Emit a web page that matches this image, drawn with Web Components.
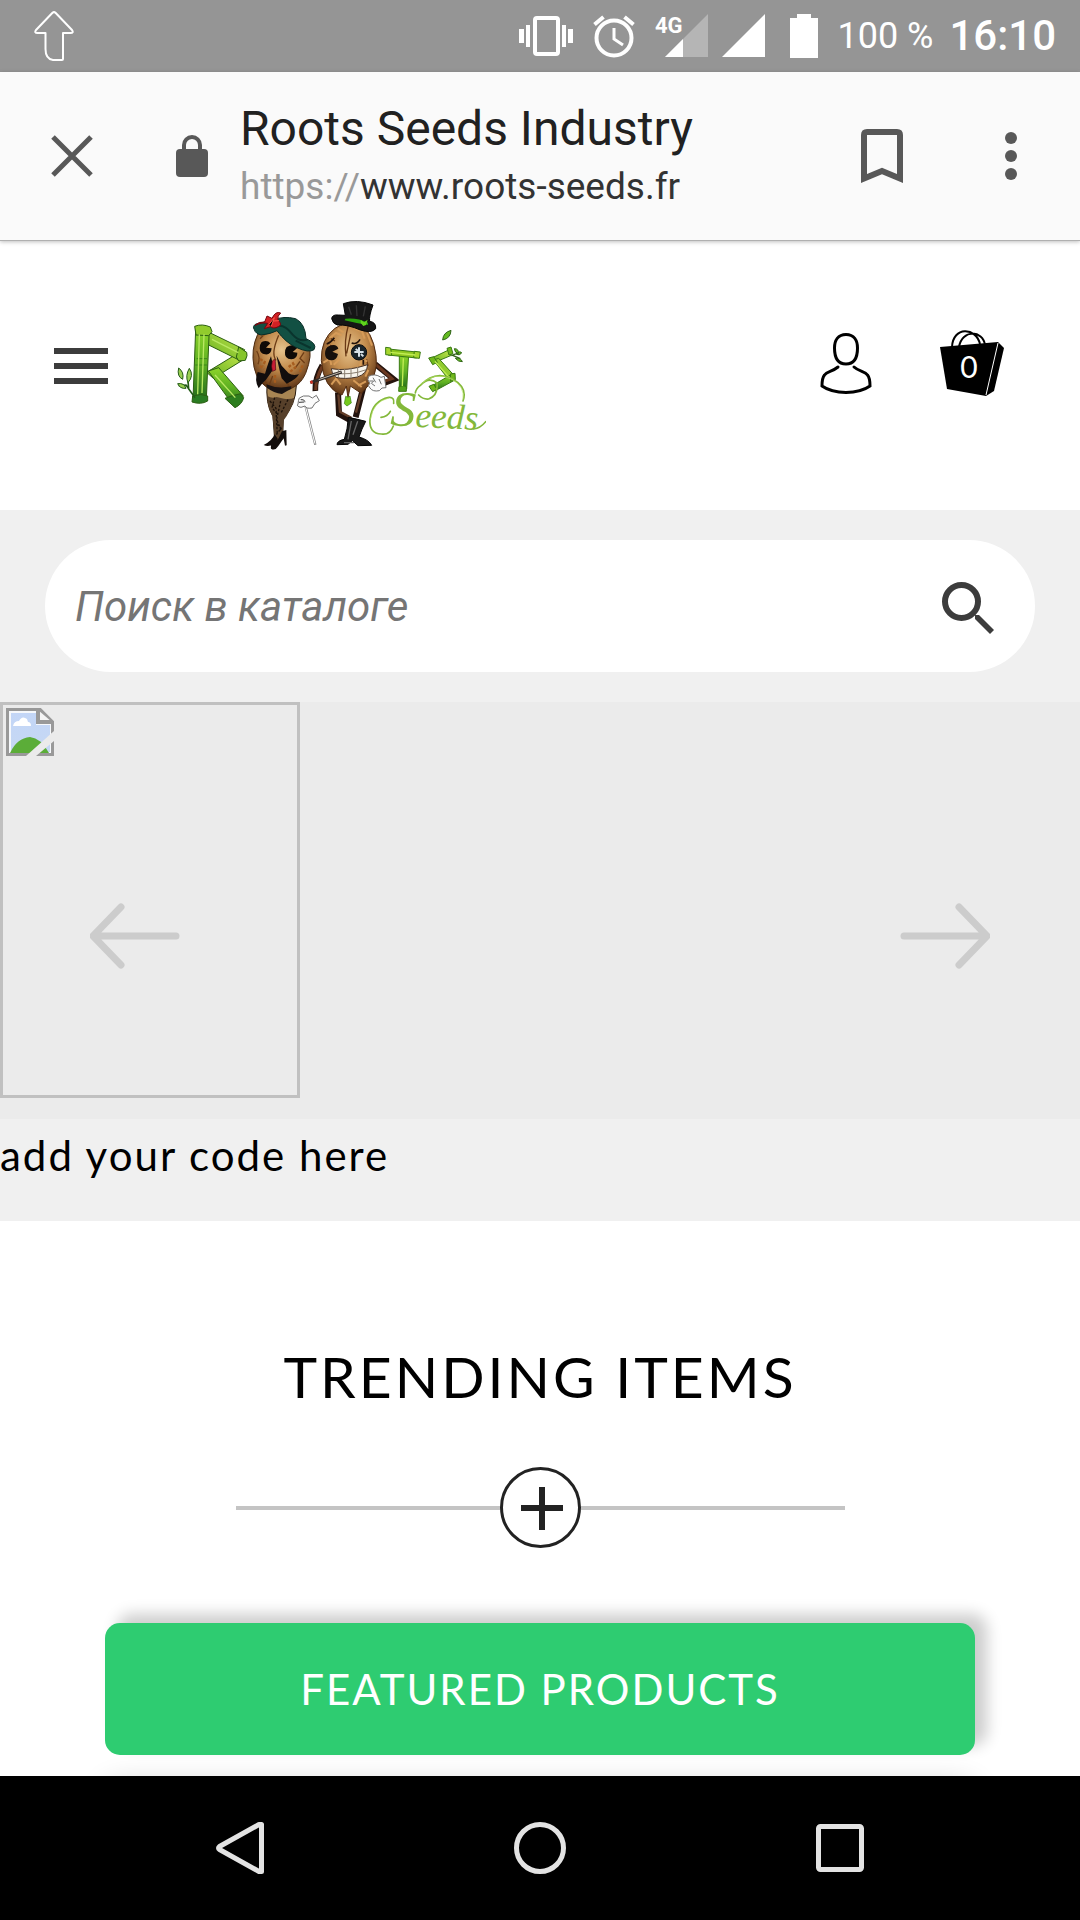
<!DOCTYPE html>
<html lang="ru">
<head>
<meta charset="UTF-8">
<meta name="viewport" content="width=device-width, initial-scale=1">
<title>Roots Seeds Industry</title>
<style>
  body {
    margin: 0;
    background: #fff;
    color: #000;
    font-family: Lato, "Noto Sans", sans-serif;
  }
</style>
</head>
<body>
<roots-app></roots-app>

<script>
/**
 * Base class: renders the markup of the component into an open shadow root
 */
class RootsElement extends HTMLElement {
  constructor() {
    super();
    this.attachShadow({ mode: 'open' });
  }

  connectedCallback() {
    this.shadowRoot.innerHTML = `
      <style>
        * { box-sizing: border-box; }
        svg { display: block; flex: none; }
        button {
          display: flex;
          align-items: center;
          justify-content: center;
          margin: 0;
          padding: 0;
          border: 0;
          background: none;
          color: inherit;
          font: inherit;
          cursor: pointer;
        }
      </style>
      ${this.template()}
    `;
  }
}

/**
 * Android status bar
 */
class StatusBar extends RootsElement {
  template() {
    return `
      <style>
        :host {
          display: flex;
          align-items: center;
          justify-content: space-between;
          height: 72px;
          padding: 0 24px 0 34px;
          background: #959595;
          color: #fff;
          font-family: Roboto, "Noto Sans", sans-serif;
        }

        .indicators {
          display: flex;
          align-items: center;
          gap: 14px;
        }

        .battery {
          font-size: 36px;
          line-height: 48px;
        }

        .time {
          padding-left: 2px;
          font-size: 42px;
          font-weight: 500;
          line-height: 48px;
        }

        .network {
          font: 700 22px Roboto, sans-serif;
        }
      </style>

      <svg width="40" height="50" viewBox="0 0 40 50" fill="none" stroke="#fff" stroke-width="2" stroke-linejoin="round">
        <path d="M18.500 1.800 Q20 .5 21.500 1.800 L38 19 Q40 22 36.500 22 H29 V48 Q29 49 28 49 H19 Q11.500 48 11.500 38 V22 H3.500 Q0 22 2 19 Z"/>
      </svg>

      <div class="indicators">
        <svg width="54" height="44" viewBox="0 0 54 44" fill="#fff">
          <path d="M0 15h5v14H0zM7 11h4v22H7zM43 11h4v22h-4zM49 15h5v14h-5z"/>
          <rect x="16" y="4" width="23" height="36" rx="2" fill="none" stroke="#fff" stroke-width="4"/>
        </svg>
        <svg width="54" height="44" viewBox="0 0 54 44" fill="none" stroke="#fff" stroke-width="4">
          <circle cx="27" cy="24" r="17.500"/>
          <path d="M7.500 10.500 16.500 3M46.500 10.500 37.500 3"/>
          <path d="M27 14v11l9 6" stroke-width="3"/>
        </svg>
        <svg width="53" height="44" viewBox="0 0 53 44" fill="#fff">
          <path d="M53 0v43H10z" opacity=".3"/>
          <path d="M28 25v18H10z"/>
          <text class="network" x="0" y="19">4G</text>
        </svg>
        <svg width="43" height="44" viewBox="0 0 43 44" fill="#fff">
          <path d="M43 0v43H0z"/>
        </svg>
        <svg width="44" height="44" viewBox="0 0 44 44" fill="#fff">
          <path d="M18 0h14v4h7v40H11V4h7z"/>
        </svg>
        <span class="battery">100 %</span>
        <span class="time">16:10</span>
      </div>
    `;
  }
}

/**
 * Custom tab toolbar with the page title and its address
 */
class BrowserBar extends RootsElement {
  template() {
    return `
      <style>
        :host {
          display: flex;
          align-items: center;
          height: 169px;
          padding: 0 33px 0 36px;
          border-bottom: 1px solid #b0b0b0;
          box-shadow: 0 1px 4px rgba(0, 0, 0, 0.25);
          background: #fafafa;
          color: #585858;
          font-family: Roboto, "Noto Sans", sans-serif;
          position: relative;
          z-index: 1;
        }

        button {
          flex: none;
          width: 72px;
          height: 72px;
        }

        .lock {
          margin: 0 32px 0 68px;
        }

        .page {
          display: flex;
          flex-direction: column;
          flex: 1;
          gap: 8px;
          min-width: 0;
          padding-bottom: 2px;
        }

        .title {
          color: #212121;
          font-size: 48px;
          line-height: 56px;
        }

        .address {
          color: #333;
          font-size: 37px;
          line-height: 44px;
        }

        .scheme {
          color: #999;
        }

        .actions {
          display: flex;
          gap: 57px;
        }
      </style>

      <button aria-label="Close">
        <svg width="42" height="42" viewBox="0 0 42 42" stroke="#585858" stroke-width="5">
          <path d="M2 2 40 40M40 2 2 40"/>
        </svg>
      </button>
      <svg class="lock" width="32" height="42" viewBox="0 0 32 42" fill="#585858">
        <rect y="14" width="32" height="28" rx="4"/>
        <path d="M8 16V10a8 8 0 0 1 16 0v6" fill="none" stroke="#585858" stroke-width="4"/>
      </svg>
      <div class="page">
        <span class="title"><slot name="title"></slot></span>
        <span class="address"><span class="scheme">https://</span><slot name="host"></slot></span>
      </div>
      <div class="actions">
        <button aria-label="Bookmark">
          <svg width="42" height="54" viewBox="0 0 42 54" fill="none" stroke="#585858" stroke-width="6">
            <path d="M3 49.500V6q0-3 3-3h30q3 0 3 3v43.500L21 42z"/>
          </svg>
        </button>
        <button aria-label="More">
          <svg width="12" height="48" viewBox="0 0 12 48" fill="#585858">
            <circle cx="6" cy="6" r="6"/><circle cx="6" cy="24" r="6"/><circle cx="6" cy="42" r="6"/>
          </svg>
        </button>
      </div>
    `;
  }
}

/**
 * Shop logo: bamboo lettering with the two seed characters
 */
class RootsLogo extends RootsElement {
  template() {
    return `
      <style>
        :host {
          display: block;
        }

        .script {
          font: italic 106px "Liberation Serif", serif;
          fill: #83b83a;
        }

        .script .initial {
          font-size: 150px;
        }
      </style>

      <svg width="309" height="150" viewBox="51 30 927 450" role="img" aria-label="Roots Seeds">
        <defs>
          <linearGradient id="cane" x1="0" y1="0" x2="0" y2="1">
            <stop offset="0" stop-color="#8ed52a"/><stop offset=".5" stop-color="#5eb022"/><stop offset="1" stop-color="#236b1b"/>
          </linearGradient>
          <linearGradient id="lime" x1="0" y1="1" x2="1" y2="0">
            <stop offset="0" stop-color="#62ad1f"/><stop offset="1" stop-color="#c5e84c"/>
          </linearGradient>
          <radialGradient id="nut" cx=".5" cy=".35" r=".65">
            <stop offset="0" stop-color="#e7c48e"/><stop offset=".5" stop-color="#c18a4b"/><stop offset="1" stop-color="#5a3113"/>
          </radialGradient>
        </defs>

        <!-- R -->
        <g stroke="#2c5f12" stroke-width="3" stroke-linejoin="round">
          <path d="M232 188 255 203 160 262 140 244z" fill="url(#lime)"/>
          <path d="M145 240 176 230 250 315 222 346z" fill="url(#cane)"/>
          <path d="M195 322q18-8 47-14l9 12q-5 20-26 30z" fill="#2d7d1e"/>
          <path d="M143 122 254 176 243 210 138 158z" fill="url(#lime)"/>
          <path d="M236 168l24 16q4 8-4 24l-20 2-7-12z" fill="#86c52b"/>
          <path d="M107 115 148 113 139 325 99 325z" fill="url(#cane)"/>
          <path d="M104 106q22-9 47 2l5 14-10 12-38-2z" fill="#91cb2d"/>
          <path d="M98 315q25-9 45 0v15q-20 12-47 3z" fill="#2a7c22"/>
          <path d="M106 222h35M110 203h31" stroke="#3d861a"/>
          <path d="M118 130 113 310M132 130 126 306M156 145 235 185M165 252 226 320" stroke="#b9e862" stroke-width="4"/>
        </g>
        <g stroke="#245b17" stroke-width="3" fill="#99cf51">
          <path d="M105 320 78 282 56 284M86 294 84 268" fill="none" stroke-width="5"/>
          <path d="M56 231q17 12 12 34-18-9-12-34zM88 232q15 22-4 43-9-21 4-43zM53 278q20-3 25 14-18 2-25-14z"/>
        </g>

        <!-- lady: stockings and shoes, body, gloves, hat -->
        <g>
          <path d="M322 270 Q315 340 339 376 L344 448 368 444 370 382 Q407 342 409 284z" fill="#a88553" stroke="#2a1b0e" stroke-width="3"/>
          <path d="M322 315 Q335 323 350 318 L372 323 Q390 326 404 320 Q392 360 371 388 L366 442 346 447 337 376 Q321 342 322 315z" fill="#57402a"/>
          <path d="M330 330l18 22 4 80M344 320l-8 30 16 20M362 330l-12 55 14 35M384 326l-22 42M350 400l14 12-15 18" fill="none" stroke="#1b110a" stroke-width="4" stroke-dasharray="7 5"/>
          <path d="M344 430q-8 20-33 32 16 7 32-4l10-15zM345 453q-15 6-12 20 12 8 22-8l16-23 4 22 5-1-1-46-13 4-10 21z" fill="#130d0b"/>
          <path d="M293 130 Q272 175 282 228 Q293 284 342 298 Q411 306 437 247 Q459 190 445 162 Q410 105 335 110z" fill="url(#nut)" stroke="#4c2b10" stroke-width="3"/>
          <path d="M356 133q-24 55-8 75M290 180q12 20 4 40M432 184l-12 18 14 14M300 143l15-15M405 232l15-21M309 258l12 22M338 255l-10 26M380 267l8 24" fill="none" stroke="#6e3d16" stroke-width="4"/>
          <path d="M306 133l19-10M300 204l14 9-5 12M386 228l13-11 7 12-16 14M300 225l12 9M345 252v26M428 223l-8 20" fill="none" stroke="#a65d1f" stroke-width="7" stroke-dasharray="9 5"/>
          <path d="M305 153q17-7 26 4l-13 13 17 2q-2 21-20 18-15-1-16-18 0-12 6-19zM380 168q20-12 31 4l-13 11 14 2q1 18-18 20-21-2-19-20 0-10 5-17z" fill="#0f0a07"/>
          <path d="M333 196 Q325 214 315 248 L293 243 Q282 268 296 292 Q307 274 318 266 L341 233z M350 194 Q351 207 365 262 L380 278 Q408 266 417 250 Q397 255 386 247 L365 224z" fill="#110d0d"/>
          <path d="M337 210q10-10 9 2l1 25-10 4q-5-15 0-31z" fill="#c81d35" stroke="#4b0a13" stroke-width="2"/>
          <path d="M319 280q33 15 75 6l-1 8q-13 6-27 15-25-3-45-19z" fill="#191313"/>
          <path d="M283 116 Q276 105 288 99 Q321 91 341 87 Q370 74 407 83 Q436 98 438 143 Q473 158 462 176 Q447 187 408 169 Q377 155 351 119 Q332 129 304 132 Q286 128 283 116z" fill="#125043" stroke="#0a2d27" stroke-width="3"/>
          <path d="M345 108q25-13 53 23 20 23 44 15M407 149l45 22" fill="none" stroke="#0a342d" stroke-width="6"/>
          <path d="M285 103q12-12 29-10l7-18 15 7q11-23 26-16-11 8-8 21 15 15 1 20-15 8-23 0l-19 6 10-16q-15-4-38 6z" fill="#d22124" stroke="#75050c" stroke-width="3"/>
          <path d="M327 100l16-20-9 26M340 90l17-1" stroke="#ff5a4c" stroke-width="3"/>
        </g>

        <!-- gentleman: arms, legs and boots, body, face, hat -->
        <g>
          <path d="M487 223q-23 38-21 77M645 219l57 46-31 12" fill="none" stroke="#25140d" stroke-width="17"/>
          <path d="M487 225q-20 38-20 72M648 221l48 42-25 8" fill="none" stroke="#6b3820" stroke-width="9"/>
          <path d="M534 304 537 369 577 391M611 285 587 379" fill="none" stroke="#21120d" stroke-width="18"/>
          <path d="M535 310 540 362 574 380M607 292 588 365" fill="none" stroke="#633d28" stroke-width="7"/>
          <path d="M565 379 Q590 384 617 391 Q605 414 597 438 Q626 446 635 463 L594 464 577 449 564 460 531 461 Q531 449 553 445 Q563 415 565 379z" fill="#191919" stroke="#050505" stroke-width="3"/>
          <path d="M574 390l-10 55M593 391l-14 40M552 455h30" stroke="#666" stroke-width="4"/>
          <path d="M525 112 Q482 144 484 209 Q490 292 546 312 L559 285 564 320 571 285 604 307 Q658 257 648 193 Q638 117 595 98 Q557 90 525 112z" fill="url(#nut)" stroke="#522b10" stroke-width="3"/>
          <path d="M565 103q-13 45-7 93M572 129l-12 58M505 138l20 12M510 163l18 5M603 210l10-5M620 205l4 20" fill="none" stroke="#6a3915" stroke-width="4"/>
          <path d="M508 142l20-16 17 7M533 113l18 11M582 113l24 8 8 22M621 126l15 38M490 215l20-12 4 19M539 205l-18 16M600 225l5-20 17 6M514 281l14-18 14 18M580 268l25 20M594 284l24-13M625 237l-9 20" fill="none" stroke="#d69b58" stroke-width="6"/>
          <path d="M508 165q22-8 27 8l-18 9 17 7q-4 20-21 19-18-2-18-20 0-18 13-23z" fill="#17100c"/>
          <circle cx="597" cy="184" r="23" fill="#19242b" stroke="#080b0d" stroke-width="3"/>
          <path d="M583 183h28M597 169v28M587 174l9 7M603 189l7 7" stroke="#d7e1e7" stroke-width="6"/>
          <path d="M500 159q12-4 23-19M575 156q15 6 25-11M610 206v15" fill="none" stroke="#22120b" stroke-width="5"/>
          <path d="M514 233q46 9 109-12-2 28-31 37-38 8-64 1-14-10-14-26z" fill="#f7f4ec" stroke="#473329" stroke-width="3"/>
          <path d="M521 246q51 8 98-10M535 234v25M554 234v27M573 231v29M593 228v28" fill="none" stroke="#8b8072" stroke-width="3"/>
          <path d="M451 275 545 243" stroke="#302b29" stroke-width="9"/>
          <path d="M476 266 543 243" stroke="#c0b7aa" stroke-width="3"/>
          <path d="M451 275l7-3" stroke="#cf3325" stroke-width="9"/>
          <path d="M557 316l-4 22 8 7 13-9-4-21-6 4z" fill="#75c91d" stroke="#34840d" stroke-width="2"/>
          <path d="M515 83 Q516 70 535 72 L556 73 550 38 Q590 23 639 42 Q626 77 629 91 Q649 94 647 113 Q635 128 601 117 Q563 100 532 102 Q518 98 515 83z" fill="#161616" stroke="#050505" stroke-width="3"/>
          <path d="M556 83q35-4 68 12v7q-35-5-70-14z" fill="#2ba30e"/>
          <path d="M602 86l10 8 11-8-5 16-8 3-8-9z" fill="#62d51d"/>
          <path d="M566 47l8 24M589 43l2 32M616 46l-6 30" stroke="#343434" stroke-width="4"/>
        </g>

        <!-- gloves and walking cane -->
        <g fill="#fbfbfb" stroke="#737373" stroke-width="3">
          <path d="M437 347 466 461" stroke="#858585" stroke-width="7"/>
          <path d="M437 349 465 458" stroke="#fff" stroke-width="3"/>
          <path d="M418 321q10-9 29-6l10 6 12-8 9 16-13 8-9 14q-18 3-21-6l-12 4q-15-3-9-10 1-13 4-18z"/>
          <path d="M422 326q8-2 14 6M417 334l16-1" fill="none" stroke="#333"/>
          <path d="M626 256q18-10 37 3l10-3 5 34-12 1-8 8q-20 4-28-8-9-7-1-14-9-12-3-21z"/>
          <path d="M628 270h13l-7 7 11 8M639 260l8 14M657 264l7 16" fill="none"/>
        </g>

        <!-- T and S -->
        <g stroke="#3a7a13" stroke-width="3" stroke-linejoin="round">
          <path d="M718 190h28l-6 104h-22z" fill="url(#cane)"/>
          <path d="M717 287q11-6 22 0v14h-23z" fill="#52a21b"/>
          <path d="M686 174 770 183v18l-86-9z" fill="#8fc720"/>
          <path d="M677 169l15 2 3 22-18-2zM763 181l18 2-3 19-17-2z" fill="#a7d62e"/>
          <path d="M866 177 813 202 817 217 874 193z" fill="url(#lime)"/>
          <path d="M820 207 836 202 881 252 868 268z" fill="#92cc2f"/>
          <path d="M875 250 883 268 826 299 815 285z" fill="url(#cane)"/>
          <path d="M806 201l15-4 11 17-14 7zM861 172l12-4 6 20-12 4zM871 249l14-2 1 19-14 5zM807 286l14-6 10 15-13 7z" fill="#6fb81b"/>
          <path d="M691 184l75 8M730 202l-3 83M825 211l45 51" stroke="#c2ed56" stroke-width="4"/>
        </g>
        <g fill="#63ba20" stroke="#316419" stroke-width="3">
          <path d="M848 147q1-22 25-29-1 24-25 29z"/>
          <path d="M874 194 894 186M878 193l23 10" fill="none" stroke-width="4"/>
          <path d="M883 173q14 0 12 15-11-3-12-15zM889 190q11-13 16-4-7 9-16 4zM886 202q16-3 21 10-12 1-21-10z"/>
        </g>

        <!-- script line with its flourish -->
        <text class="script" x="690" y="403" transform="rotate(3 690 403)"><tspan class="initial">S</tspan>eeds</text>
        <g fill="none" stroke="#83b83a" stroke-width="5" stroke-linecap="round">
          <path d="M663 379q20-2 28-18M700 405Q690 433 664 429 Q626 427 630 384 Q637 329 687 319 Q704 318 701 337"/>
          <path d="M776 312 Q790 326 806 324 Q835 313 831 276 Q807 256 781 283 Q768 292 766 306M781 283 Q824 237 876 263 Q924 289 909 330M941 414q20-2 36-22"/>
        </g>
        <path d="M632 384Q639 331 687 321M781 281 Q824 239 876 265 Q915 287 909 325" fill="none" stroke="#b6e265" stroke-width="2"/>
      </svg>
    `;
  }
}

/**
 * Shop header: menu, logo, account and cart
 */
class ShopHeader extends RootsElement {
  template() {
    return `
      <style>
        :host {
          display: block;
          background: #fff;
        }

        header {
          display: flex;
          align-items: center;
          padding: 40px 76px 59px 54px;
        }

        .logo {
          margin-left: 69px;
          padding-top: 20px;
        }

        nav {
          display: flex;
          align-items: center;
          gap: 68px;
          margin-left: auto;
          padding-bottom: 6px;
        }

        a {
          display: block;
          color: inherit;
          text-decoration: none;
        }

        .cart {
          position: relative;
        }

        .count {
          position: absolute;
          inset: 18px 6px auto 0;
          color: #fff;
          font-size: 30px;
          line-height: 36px;
          text-align: center;
        }
      </style>

      <header>
        <button aria-label="Menu">
          <svg width="54" height="36" viewBox="0 0 54 36" fill="#3c3c3c">
            <path d="M0 0h54v6H0zM0 15h54v6H0zM0 30h54v6H0z"/>
          </svg>
        </button>
        <a class="logo" href="#home"><roots-logo></roots-logo></a>
        <nav>
          <a href="#account" aria-label="Account">
            <svg width="52" height="66" viewBox="0 0 52 66" fill="none" stroke="#000" stroke-width="3" stroke-linecap="round">
              <path d="M26 4.500c8 0 11.500 6 11.500 13.500 0 9-3 16-11.500 16s-11.500-7-11.500-16C14.500 10.500 18 4.500 26 4.500z"/>
              <path d="M18 37c-6 5-11 4-13.500 8C2 48 2 51 2 56c12 8.500 36 8.500 48 0 0-5 0-8-2.500-11-2.500-4-8-3-13.500-8"/>
            </svg>
          </a>
          <a class="cart" href="#cart" aria-label="Cart">
            <svg width="64" height="66" viewBox="0 0 64 66">
              <path d="M0 17 58 12 64 18 54 61 46 66 7 59z"/>
              <path d="M12 17C13-4 36-3 40 14M19 17C22-1 43 0 45 15" fill="none" stroke="#000" stroke-width="2"/>
              <path d="M58 13 46 65" stroke="#fff" stroke-width="1"/>
            </svg>
            <span class="count">0</span>
          </a>
        </nav>
      </header>
    `;
  }
}

/**
 * Catalogue search box
 */
class CatalogSearch extends RootsElement {
  template() {
    return `
      <style>
        :host {
          display: block;
          padding: 30px 45px;
          background: #f0f0f0;
        }

        form {
          display: flex;
          align-items: center;
          height: 132px;
          padding: 0 30px;
          border-radius: 66px;
          background: #fff;
        }

        input {
          flex: 1;
          min-width: 0;
          height: 100%;
          padding: 0;
          border: 0;
          outline: 0;
          background: none;
          font: italic 42px Roboto, "Noto Sans", sans-serif;
        }

        input::placeholder {
          color: #757575;
          opacity: 1;
        }

        button {
          width: 74px;
          height: 74px;
          padding-top: 4px;
        }
      </style>

      <form role="search">
        <input type="search" placeholder="Поиск в каталоге" aria-label="Поиск в каталоге">
        <button type="button" aria-label="Поиск">
          <svg width="52" height="52" viewBox="0 0 52 52" fill="none" stroke="#3c3c3c">
            <circle cx="19.500" cy="19.500" r="16.500" stroke-width="6"/>
            <path d="M33 33h4L52 48 48 52 33 37z" fill="#3c3c3c" stroke="none"/>
          </svg>
        </button>
      </form>
    `;
  }
}

/**
 * Banner slider; shows the placeholder frame of a slide that has no picture
 */
class BannerSlider extends RootsElement {
  template() {
    return `
      <style>
        :host {
          display: block;
          position: relative;
          padding-bottom: 21px;
          background: #ebebeb;
        }

        .slide {
          width: 300px;
          height: 396px;
          padding: 3px;
          border: 3px solid #c0c0c0;
        }

        .controls {
          position: absolute;
          inset: 0 90px 0 90px;
          display: flex;
          align-items: center;
          justify-content: space-between;
          padding-top: 51px;
        }
      </style>

      <div class="slide">
        <svg width="48" height="48" viewBox="0 0 48 48" role="img" aria-label="Banner">
          <defs>
            <linearGradient id="sky" x1="0" y1="0" x2="0" y2="1">
              <stop offset="0" stop-color="#c3d6f7"/><stop offset="1" stop-color="#c6d8f3"/>
            </linearGradient>
          </defs>
          <path d="M1 1H33L47 15V47H1z" fill="#f6f8fb" stroke="#999" stroke-width="4"/>
          <path d="M5 5H30V17H44V44H5z" fill="url(#sky)"/>
          <path d="M7 18q1-5 6-5 3-6 8-2l1 3q3 0 3 4z" fill="#fff"/>
          <path d="M4 45Q11 30 24 29 35 30 43 45z" fill="#5bad38"/>
          <path d="M32 2V14H46" fill="#f4f4f4" stroke="#999" stroke-width="4"/>
          <path d="M20 48 48 23V33L30 48z" fill="#ebebeb"/>
        </svg>
      </div>
      <div class="controls">
        <button aria-label="Previous">
          <svg width="90" height="66" viewBox="0 0 90 66" fill="none" stroke="#ccc" stroke-width="7" stroke-linecap="round" stroke-linejoin="round">
            <path d="M31 4 3 33 31 62M4 33H86"/>
          </svg>
        </button>
        <button aria-label="Next">
          <svg width="90" height="66" viewBox="0 0 90 66" fill="none" stroke="#ccc" stroke-width="7" stroke-linecap="round" stroke-linejoin="round">
            <path d="M59 4 87 33 59 62M86 33H4"/>
          </svg>
        </button>
      </div>
    `;
  }
}

/**
 * Strip for a custom code block
 */
class CodeBlock extends RootsElement {
  template() {
    return `
      <style>
        :host {
          display: block;
          padding: 6px 0 36px;
          background: #f0f0f0;
          font-size: 42px;
          line-height: 60px;
          letter-spacing: 2px;
        }
      </style>
      <slot></slot>
    `;
  }
}

/**
 * Trending items: title, divider and the tab button with its panel
 */
class TrendingItems extends RootsElement {
  template() {
    return `
      <style>
        :host {
          display: block;
          padding: 119px 105px 0;
          background: #fff;
        }

        h2 {
          margin: 0;
          font-size: 57px;
          font-weight: 400;
          line-height: 72px;
          letter-spacing: 3px;
          text-align: center;
          text-transform: uppercase;
        }

        .divider {
          display: flex;
          align-items: center;
          width: 70%;
          margin: 55px auto 75px;
        }

        .divider::before,
        .divider::after {
          content: "";
          flex: 1;
          height: 4px;
          background: #c4c4c4;
        }

        .tab {
          width: 100%;
          height: 132px;
          border-radius: 15px;
          background: #2ecc71;
          box-shadow: 12px -9px 15px rgba(0, 0, 0, 0.2);
          color: #fff;
          font-size: 42px;
          letter-spacing: 2px;
          text-transform: uppercase;
        }

        .panel {
          height: 300px;
          margin-top: 30px;
          border-radius: 15px;
          background: #fff;
          box-shadow: 0 0 30px rgba(0, 0, 0, 0.2);
        }
      </style>

      <h2><slot name="title"></slot></h2>
      <div class="divider">
        <svg width="81" height="81" viewBox="0 0 81 81" fill="none" stroke="#222">
          <circle cx="40.500" cy="40.500" r="39" stroke-width="3"/>
          <path d="M21 41H63M42 20V63" stroke-width="6"/>
        </svg>
      </div>
      <button class="tab"><slot name="tab"></slot></button>
      <div class="panel"></div>
    `;
  }
}

/**
 * Android navigation bar
 */
class SystemNav extends RootsElement {
  template() {
    return `
      <style>
        :host {
          display: flex;
          flex: none;
          height: 144px;
          padding: 0 90px;
          background: #000;
        }

        button {
          flex: 1;
        }
      </style>

      <button aria-label="Back">
        <svg width="48" height="52" viewBox="0 0 48 52" fill="none" stroke="#e3e3e3" stroke-width="5" stroke-linejoin="round">
          <path d="M45.500 2.500V49.500L43 49.500 3.500 27.500Q1.500 26 3.500 24.500L43 2.500z"/>
        </svg>
      </button>
      <button aria-label="Home">
        <svg width="52" height="52" viewBox="0 0 52 52" fill="none" stroke="#e3e3e3" stroke-width="5">
          <circle cx="26" cy="26" r="23.500"/>
        </svg>
      </button>
      <button aria-label="Recent apps">
        <svg width="48" height="48" viewBox="0 0 48 48" fill="none" stroke="#e3e3e3" stroke-width="5">
          <rect x="2.500" y="2.500" width="43" height="43" rx="2"/>
        </svg>
      </button>
    `;
  }
}

/**
 * Screen shell: system bars around the scrolled shop page
 */
class RootsApp extends RootsElement {
  template() {
    return `
      <style>
        :host {
          display: flex;
          flex-direction: column;
          height: 100vh;
        }

        main {
          flex: 1;
          min-height: 0;
          overflow: hidden;
        }
      </style>

      <status-bar></status-bar>
      <browser-bar>
        <span slot="title">Roots Seeds Industry</span>
        <span slot="host">www.roots-seeds.fr</span>
      </browser-bar>
      <main>
        <shop-header></shop-header>
        <catalog-search></catalog-search>
        <banner-slider></banner-slider>
        <code-block>add your code here</code-block>
        <trending-items>
          <span slot="title">Trending items</span>
          <span slot="tab">Featured products</span>
        </trending-items>
      </main>
      <system-nav></system-nav>
    `;
  }
}

customElements.define('status-bar', StatusBar);
customElements.define('browser-bar', BrowserBar);
customElements.define('roots-logo', RootsLogo);
customElements.define('shop-header', ShopHeader);
customElements.define('catalog-search', CatalogSearch);
customElements.define('banner-slider', BannerSlider);
customElements.define('code-block', CodeBlock);
customElements.define('trending-items', TrendingItems);
customElements.define('system-nav', SystemNav);
customElements.define('roots-app', RootsApp);
</script>
</body>
</html>
